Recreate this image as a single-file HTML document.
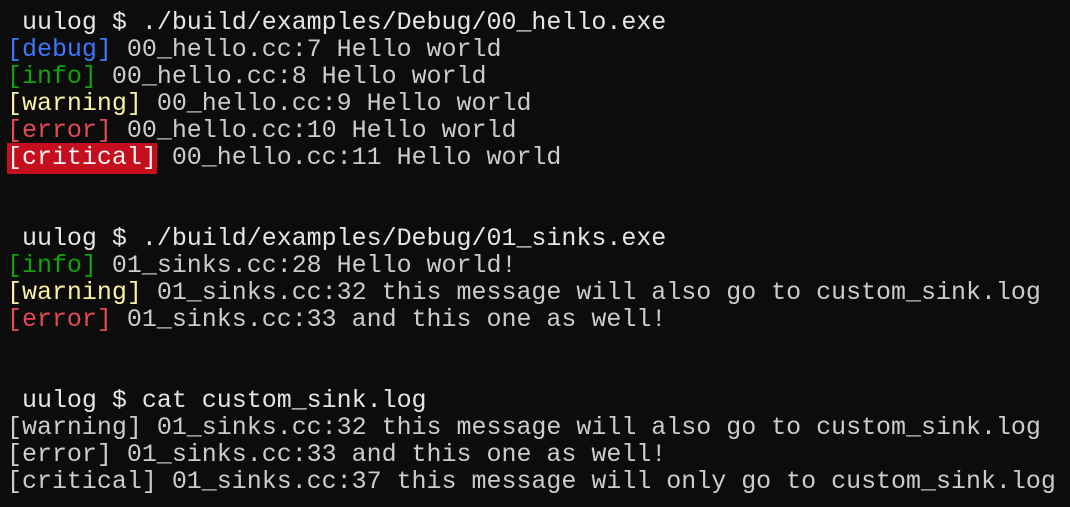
<!DOCTYPE html>
<html><head><meta charset="utf-8"><style>
html,body{margin:0;padding:0;background:#0c0c0c;width:1070px;height:507px;overflow:hidden}
pre{margin:0;padding:10px 0 0 7px;font-family:"Liberation Mono",monospace;font-size:24.97px;line-height:27px;color:#cccccc;white-space:pre}
.p{color:#e6e6e6}
.b{color:#3b78ff}.g{color:#13a10e}.y{color:#f9f1a5}.r{color:#e74856}
.c{background:#c50f1f;color:#f2f2f2;padding:1px 0 2px}
</style></head><body><pre><span class="p"> uulog $ ./build/examples/Debug/00_hello.exe</span>
<span class="b">[debug]</span> 00_hello.cc:7 Hello world
<span class="g">[info]</span> 00_hello.cc:8 Hello world
<span class="y">[warning]</span> 00_hello.cc:9 Hello world
<span class="r">[error]</span> 00_hello.cc:10 Hello world
<span class="c">[critical]</span> 00_hello.cc:11 Hello world


<span class="p"> uulog $ ./build/examples/Debug/01_sinks.exe</span>
<span class="g">[info]</span> 01_sinks.cc:28 Hello world!
<span class="y">[warning]</span> 01_sinks.cc:32 this message will also go to custom_sink.log
<span class="r">[error]</span> 01_sinks.cc:33 and this one as well!


<span class="p"> uulog $ cat custom_sink.log</span>
[warning] 01_sinks.cc:32 this message will also go to custom_sink.log
[error] 01_sinks.cc:33 and this one as well!
[critical] 01_sinks.cc:37 this message will only go to custom_sink.log
</pre></body></html>
